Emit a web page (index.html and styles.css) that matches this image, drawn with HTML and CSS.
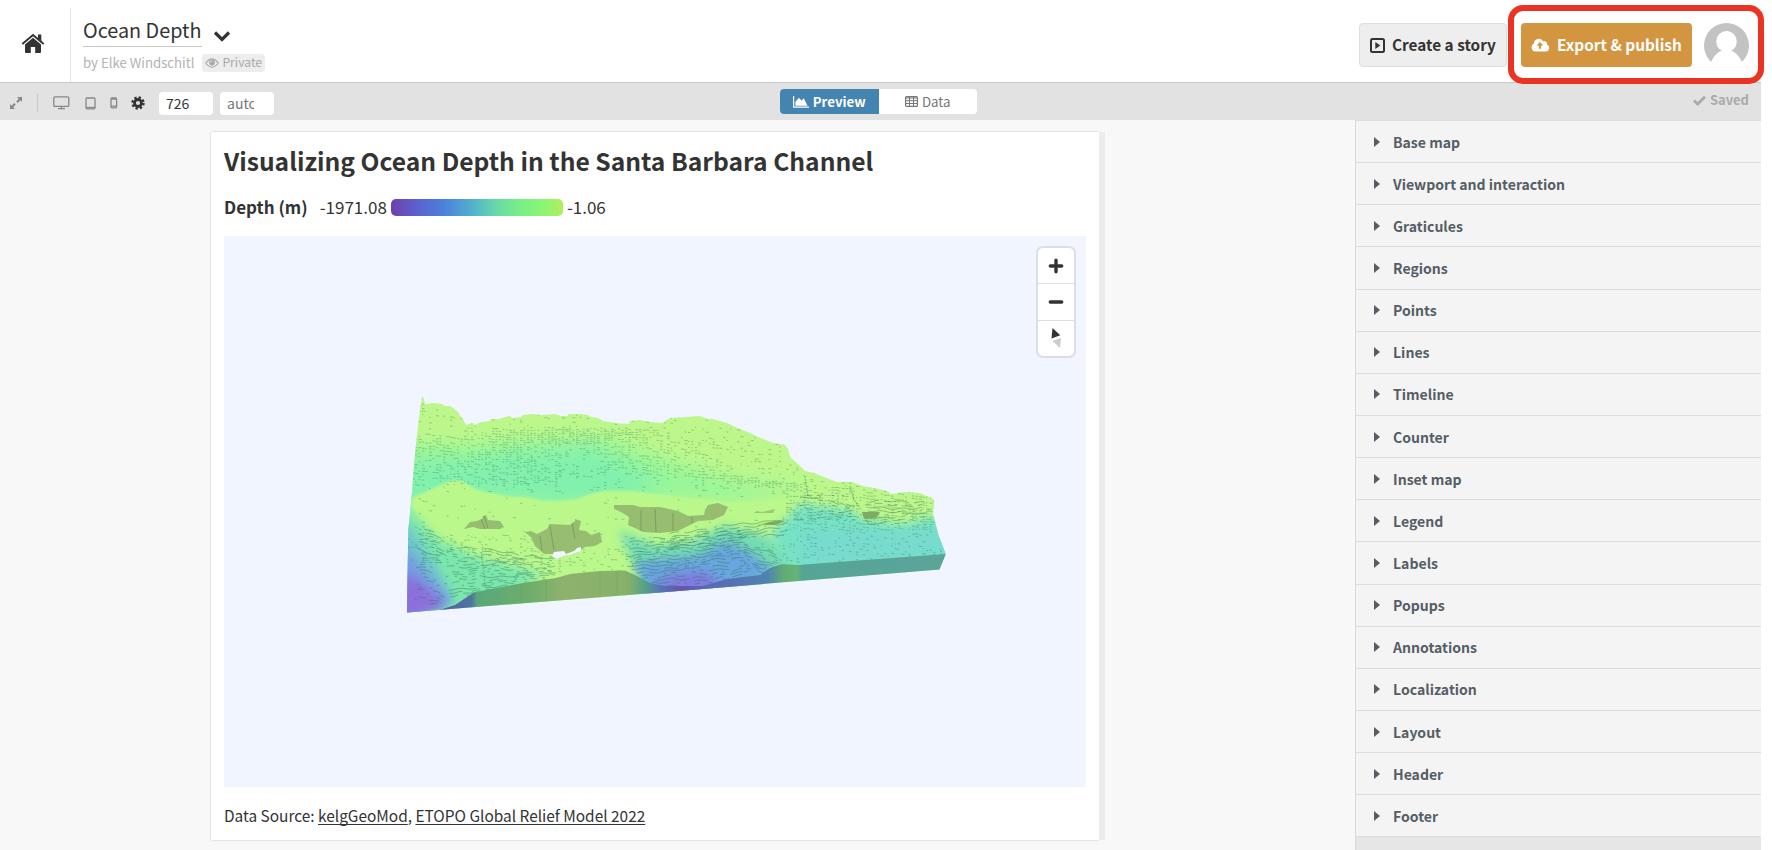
FILE: index.html
```html
<!DOCTYPE html>
<html lang="en">
<head>
<meta charset="utf-8">
<title>Ocean Depth</title>
<link rel="stylesheet" href="styles.css">
</head>
<body>
<div class="app">
  <header class="header">
    <div class="home"><svg width="24" height="21" viewBox="0 0 24 21"><path d="M12 4.8 4 11.4V19q0 1 1 1h4.8v-6h4.400v6H19q1 0 1-1v-7.600z"/><path d="M1.300 10.900 12 2l10.700 8.900" fill="none" stroke="#333" stroke-width="1.900"/><path d="M17 1.500h3.300v7L17 5.500z"/></svg></div>
    <div class="doc">
      <div class="doc-row"><span class="doc-name">Ocean Depth</span><svg class="chev" width="18" height="13" viewBox="0 0 18 13"><path d="M2 2.500 9 9.500 16 2.500" fill="none" stroke="#333" stroke-width="3.200"/></svg></div>
      <div class="by-row"><span class="by">by Elke Windschitl</span><span class="badge"><svg width="14" height="10" viewBox="0 0 14 10"><path d="M.7 5Q7-3.200 13.300 5 7 13.200.7 5z" fill="none" stroke="#aaa" stroke-width="1.200"/><circle cx="7" cy="4.500" r="2.900" fill="#aaa"/><path d="M5.500 4.300Q5.600 3 7 2.900" fill="none" stroke="#eee" stroke-width=".8"/></svg><span>Private</span></span></div>
    </div>
    <div class="actions">
      <button class="btn story"><svg width="15" height="15" viewBox="0 0 15 15"><rect x="1" y="1" width="13" height="13" rx="1.500" fill="none" stroke="#333" stroke-width="2"/><path d="M5.300 4v7l5-3.500z" fill="#333"/></svg><span>Create a story</span></button>
      <button class="btn export"><svg width="19" height="14" viewBox="0 0 19 14"><path d="M4.500 13.500A4.200 4.200 0 0 1 2.800 5.600 5 5 0 0 1 12 3.200a3 3 0 0 1 4 3.400 3.600 3.600 0 0 1-1 6.900z" fill="#fff"/><path d="M8.900 4 5.500 7.500h2.300v3.300h2.300V7.500h2.300z" fill="#d39540"/></svg><span>Export &amp; publish</span></button>
      <svg class="avatar" width="45" height="45" viewBox="0 0 45 45"><defs><clipPath id="av"><path d="M0 0h45v39H0z"/></clipPath></defs><g clip-path="url(#av)"><circle cx="22.500" cy="22.500" r="22.500" fill="#c3c3c3"/><ellipse cx="22.500" cy="18.500" rx="10.300" ry="10.500" fill="#fff"/><path d="M18 25v2.500Q11 30 6.500 40v5h32v-5Q34 30 27 27.500V25z" fill="#fff"/></g></svg>
      <div class="highlight"></div>
    </div>
  </header>
  <div class="toolbar">
    <div class="tools">
      <svg class="t-expand" width="14" height="14" viewBox="0 0 14 14" fill="#888"><path d="M8 1h5v5l-1.700-1.700-2.600 2.600-1.500-1.500 2.600-2.700zM6 13H1V8l1.700 1.700 2.600-2.600 1.500 1.500-2.600 2.700z"/></svg>
      <i class="rule"></i>
      <svg class="t-mon" width="17" height="14" viewBox="0 0 17 14" fill="none" stroke="#888" stroke-width="1.300"><rect x=".8" y=".8" width="15" height="9.600" rx="1"/><path d="M8.500 10v2.500M5 12.700h7"/></svg>
      <svg class="t-tab" width="11" height="13" viewBox="0 0 11 13" fill="none" stroke="#888" stroke-width="1.300"><rect x="1" y="1" width="9" height="10.800" rx="1"/><path d="M1 10.500h9"/></svg>
      <svg class="t-ph" width="8" height="12" viewBox="0 0 8 12" fill="none" stroke="#888" stroke-width="1.300"><rect x="1" y="1" width="5.600" height="9.800" rx="1"/><path d="M1 9.200h6M1 2h6"/></svg>
      <svg class="t-gear" width="14" height="14" viewBox="0 0 14 14" fill="none" stroke="#333"><circle cx="7" cy="7" r="3.500" stroke-width="2.800"/><circle cx="7" cy="7" r="5.600" stroke-width="2.200" stroke-dasharray="2.300 2.098"/></svg>
      <div class="num">726</div><div class="num auto"><span>auto</span></div>
    </div>
    <div class="tabs">
      <div class="tab on"><svg width="16" height="12" viewBox="0 0 16 12"><path d="M.6 0v11.200H16" fill="none" stroke="#fff" stroke-width="1.200"/><path d="M2.300 9.700V6l3.500-4.200 2.700 2.700 2.300-2.200 3.700 7.400z" fill="#fff"/></svg><span>Preview</span></div>
      <div class="tab"><svg width="13" height="11" viewBox="0 0 13 11" fill="none" stroke="#777"><rect x=".6" y=".6" width="11.800" height="9.800" rx="1" stroke-width="1.200"/><path d="M1 2h11M1 4.700h11M1 7.500h11M4.500 1v9.500M8.500 1v9.500"/></svg><span>Data</span></div>
    </div>
    <div class="saved"><svg width="13" height="11" viewBox="0 0 13 11"><path d="M1 5.500 4.700 9 12 1.700" fill="none" stroke="#aaa" stroke-width="2.800"/></svg><span>Saved</span></div>
  </div>
  <div class="main">
    <div class="stage">
      <div class="card">
        <h1 class="title">Visualizing Ocean Depth in the Santa Barbara Channel</h1>
        <div class="legend"><b>Depth (m)</b><span class="lo">-1971.08</span><i class="ramp"></i><span>-1.06</span></div>
        <div class="map">
          <svg class="terrain" width="862" height="551" viewBox="224 236 862 551">
            <defs>
              <clipPath id="land"><path d="M422 396L424 399 425 404 434 403 442 404 445 406 450 406 453 408 458 412 460 416 463 419 466 425 472 423 475 425 481 422 490 421 491 419 499 419 505 417 510 416 512 418 521 417 523 415 533 414 541 415 555 414 560 416 567 416 569 414 580 414 588 415 591 417 598 418 603 421 610 422 620 423.500 629 424 630 421 640 420 650 422 663 423 667 420 670 418 685 417 700 416 708 419 713 419 727 423 735 427 750 433 758 437 773 443 785 445 788 449 790 457 797 463 805 471 814 473 824 477 837 482 852 482 863 486 874 488 887 491 892 494 905 492 920 493 926 496 932 498 934 500 934 506 933 513 938 534 945.700 554 939.500 569.500 660 592.500 407 612.500 408.300 530 411.700 496Q414 465 416 445L418.300 423z"/></clipPath>
              <linearGradient id="wall" gradientUnits="userSpaceOnUse" x1="407" x2="945" y1="0" y2="0"><stop offset="0" stop-color="#5b489f"/><stop offset=".12" stop-color="#4d74a4"/><stop offset=".13" stop-color="#58a77a"/><stop offset=".23" stop-color="#6fae6c"/><stop offset=".29" stop-color="#8db26d"/><stop offset=".41" stop-color="#87b26b"/><stop offset=".44" stop-color="#56a383"/><stop offset=".47" stop-color="#5577b6"/><stop offset=".51" stop-color="#6655ac"/><stop offset=".56" stop-color="#5a68b5"/><stop offset=".67" stop-color="#4f82b0"/><stop offset=".7" stop-color="#62ab76"/><stop offset=".725" stop-color="#64b477"/><stop offset=".735" stop-color="#55a596"/><stop offset="1" stop-color="#5ca49a"/></linearGradient>
              <filter id="b5" x="-30%" y="-50%" width="160%" height="200%"><feGaussianBlur stdDeviation="5"/></filter>
              <filter id="b9" x="-30%" y="-50%" width="160%" height="200%"><feGaussianBlur stdDeviation="9"/></filter>
              <filter id="b2" x="-30%" y="-50%" width="160%" height="200%"><feGaussianBlur stdDeviation="1.200"/></filter>
            </defs>
            <g clip-path="url(#land)">
              <path d="M400 390h560v230H400z" fill="#bdf78b"/>
              <path d="M400 444 470 447 530 441 600 438 655 456 730 480 810 490 740 500 670 500 550 502 470 500 400 498z" fill="#98f69a" filter="url(#b9)"/>
              <path d="M400 460 450 460 530 452 590 448 640 470 660 490 580 506 480 498 400 520z" fill="#82f1ad" filter="url(#b9)"/>
              <path d="M412 498 418 495 436 487 450 481 456 480 466 483 475 489 490 493 507 496 530 498 542 501 560 501 577 499 590 494 605 491 630 491 680 497 730 503 780 500 800 496 780 525 690 540 640 545 625 580 540 578 470 560 440 545 425 525 411 506z" fill="#bbf88b" filter="url(#b2)"/>
              <path d="M400 510 418 518 440 540 475 556 520 568 545 574 500 600 400 620z" fill="#7be7ac" filter="url(#b5)"/>
              <path d="M400 515 412 530 430 555 445 580 455 605 400 622z" fill="#6fc5cf" filter="url(#b5)"/>
              <path d="M400 545 412 555 428 575 452 600 400 622z" fill="#779be0" filter="url(#b5)"/>
              <path d="M400 572 418 580 446 605 400 622z" fill="#8b70dc" filter="url(#b5)"/>
              <path d="M618 530 655 545 690 542 725 525 765 535 800 560 770 580 650 600z" fill="#75dcb2" filter="url(#b5)"/>
              <path d="M634 562 700 555 725 540 750 552 774 570 725 600 650 598z" fill="#69a6df" filter="url(#b5)"/>
              <path d="M648 586 675 574 705 572 722 583 695 592z" fill="#8278e0" filter="url(#b5)"/>
              <path d="M770 535 800 504 850 510 865 520 900 525 940 515 960 565 790 572z" fill="#78e2c4" filter="url(#b5)"/>
              <path d="M800 530 850 528 900 530 950 528 950 560 800 565z" fill="#77dcce" filter="url(#b5)"/>
              <path id="grain" fill="none" stroke="#2d7752" stroke-opacity=".38" stroke-width=".9"/>
              <path id="waves" fill="none" stroke="#2f6f5b" stroke-opacity=".42" stroke-width="1"/>
              <path d="M850 486 854 500 860 508M805 476 808 497M481 552 484 572 485 586M838 495v10M820 496v10" fill="none" stroke="#5c965f" stroke-opacity=".55" stroke-width="1.300" stroke-dasharray="2 1"/>
              <path d="M862 512 880 512 876 518 864 519z M762 524 779 520 785 521 776 525 767 525z" fill="#7eaa62"/>
              <g fill="#97bd70">
                <path d="M464 529 470 522 477 521 482 519 483 516 486 515 488 520 500 521 504 527 500 529 480 529 473 527z"/>
                <path d="M522 530 526 532 531 531 537 534 545 530 548 528 549 524 570 525 575 521 575 519 581 521 579 530 586 531 591 535 600 532 602 542 595 546 585 547 578 552 573 554 552 554 544 554 535 546 531 537z"/>
                <path d="M614 505 622 505 633 505 640 507 660 507 678 511 688 516 704 515 705 510 708 505 718 503 728 507 724 515 713 520 698 521 688 526 678 531 660 533 643 532 637 529 628 525 629 517 621 512 614 509z"/>
                <path d="M756 511 762 512 775 509 773 513 756 513z" opacity=".8"/>
              </g>
              <path d="M481 519l4 10M484 516l4 12M540 536l2 15M550 526l4 24M572 523l3 16M641 510v21M655 509l1 23M673 513v18M692 517v6" stroke="#5d7f48" stroke-opacity=".5" fill="none"/>
              <path d="M552 556 554 552 564 551 566 554 574 551 577 548 581 547 581 551 570 555 563 556 557 559z" fill="#f0f5ff"/>
              <path d="M430 613 455 605 473 593 486 590 523 583 556 578 570 574 600 571 625 570.500 635 575 650 583 665 586 703 586 727 579 760 575 770 568 782 564 797 565 946 554 940 575 661 598 407 618z" fill="url(#wall)"/>
              <path d="M521 584v24M546 581v24M600 572v28M617 571v27M627 572v25" stroke="#4a6a44" stroke-opacity=".12" fill="none"/>
            </g>
          </svg>
          <div class="controls">
            <div class="ctl"><svg width="16" height="16" viewBox="0 0 16 16"><path d="M8 2.300v11.400M2.300 8h11.400" stroke="#333" stroke-width="3.400" stroke-linecap="round"/></svg></div>
            <div class="ctl"><svg width="16" height="16" viewBox="0 0 16 16"><path d="M2.300 8h11.400" stroke="#333" stroke-width="3.400" stroke-linecap="round"/></svg></div>
            <div class="ctl"><svg width="16" height="22" viewBox="0 0 16 22"><path d="M4.500 1 12.300 8.300 3.500 11.500z" fill="#333"/><path d="M4.500 14 13 11 12 21z" fill="#ccc"/></svg></div>
          </div>
        </div>
        <div class="source">Data Source: <u>kelgGeoMod</u>, <u>ETOPO Global Relief Model 2022</u></div>
      </div>
      <div class="handle"></div>
    </div>
    <aside class="side">
      <div class="row">Base map</div><div class="row">Viewport and interaction</div><div class="row">Graticules</div><div class="row">Regions</div><div class="row">Points</div><div class="row">Lines</div><div class="row">Timeline</div><div class="row">Counter</div><div class="row">Inset map</div><div class="row">Legend</div><div class="row">Labels</div><div class="row">Popups</div><div class="row">Annotations</div><div class="row">Localization</div><div class="row">Layout</div><div class="row">Header</div><div class="row">Footer</div>
    </aside>
  </div>
</div>
<script src="terrain.js"></script>
</body>
</html>
```

FILE: styles.css
```css
* { box-sizing: border-box; }
body { margin: 0; width: 1772px; height: 850px; overflow: hidden; background: #fff; color: #333; font-family: "Noto Sans CJK SC", "Noto Sans", sans-serif; }
svg { display: block; flex: none; }
.app { width: 1761px; height: 850px; display: flex; flex-direction: column; }
.header { height: 83px; flex: none; display: flex; border-bottom: 1px solid #c9c9c9; }
.home { width: 71px; margin-top: 8px; padding: 25px 0 0 21px; border-right: 1px solid #e6e6e6; fill: #333; }
.doc { padding: 17px 0 0 12px; }
.doc-row { display: flex; }
.doc-name { font-size: 19.8px; line-height: 26px; height: 30px; border-bottom: 1px solid #c8c8c8; white-space: nowrap; }
.chev { margin: 13px 0 0 11px; }
.by-row { display: flex; align-items: center; margin-top: 6px; height: 19px; }
.by { font-size: 13.2px; line-height: 19px; color: #b3b3b3; white-space: nowrap; }
.badge { display: flex; align-items: center; gap: 3px; height: 18px; margin-left: 8px; padding: 0 3px; border-radius: 4px; background: #ededed; color: #aaa; font-size: 12.2px; line-height: 17px; }
.badge span { padding-bottom: 1px; }
.actions { margin-left: auto; display: flex; position: relative; padding: 23px 12px 0 0; }
.btn { display: flex; align-items: center; height: 44px; border-radius: 4px; font-family: inherit; font-weight: 700; font-size: 15.35px; line-height: 20px; padding: 0; white-space: nowrap; }
.btn span { padding-bottom: 2px; }
.story { width: 148px; padding-left: 10px; gap: 7px; background: #eee; border: 1px solid #ddd; color: #333; }
.export { width: 171px; margin-left: 14px; padding-left: 10px; gap: 7px; background: #d39540; color: #fff; border: 0; }
.avatar { margin-left: 12px; }
.highlight { position: absolute; left: 149px; top: 5px; width: 256px; height: 79px; border: 6px solid #ea3323; border-radius: 15px; z-index: 2; }
.toolbar { height: 37px; flex: none; background: #e2e2e2; display: flex; align-items: flex-start; }
.tools { width: 780px; height: 37px; display: flex; align-items: center; padding: 3px 0 0 9px; }
.rule { width: 1px; height: 18px; margin-left: 14px; background: #c6c6c6; }
.t-mon { margin-left: 15px; }
.t-tab { margin-left: 15px; }
.t-ph { margin-left: 14px; }
.t-gear { margin-left: 13px; }
.num { width: 54px; height: 23px; margin-left: 14px; padding-left: 7px; background: #fff; border-radius: 4px; font-size: 14px; line-height: 22px; }
.auto { margin-left: 7px; color: #777; }
.auto span { display: block; width: 27px; overflow: hidden; }
.tabs { display: flex; width: 197px; height: 25px; margin-top: 6px; border-radius: 4px; overflow: hidden; background: #fff; font-size: 13.3px; line-height: 24px; color: #777; }
.tab { flex: 1; display: flex; align-items: center; justify-content: center; gap: 4px; }
.on { background: #4384b0; color: #fff; font-weight: 700; }
.saved { margin-left: auto; padding: 8px 12px 0 0; display: flex; align-items: center; gap: 4px; color: #aaa; font-size: 13px; line-height: 18px; font-weight: 700; }
.main { flex: 1; display: flex; min-height: 0; }
.stage { width: 1355px; background: #f8f8f8; padding: 12px 0 0 211px; display: flex; }
.card { width: 888px; height: 708px; padding: 0 13px; background: #fff; box-shadow: 0 0 2px rgba(0,0,0,.22); }
.title { margin: 0; padding-top: 10px; font-size: 24.64px; line-height: 36px; height: 48px; white-space: nowrap; }
.legend { display: flex; align-items: center; height: 24px; margin-top: 15px; font-size: 17px; line-height: 24px; }
.legend .lo { margin-left: 12px; }
.ramp { width: 172px; height: 17px; margin: 0 4px; border-radius: 5px; background: linear-gradient(90deg, #6e40aa, #5b61cf 15%, #4b7fdb 30%, #53b3cb 48%, #69dca5 62%, #7aef84 76%, #87f577 87%, #aff05b); }
.map { position: relative; height: 551px; margin-top: 17px; background: #f0f5ff; }
.controls { position: absolute; left: 812px; top: 10px; width: 40px; height: 112px; border: 2px solid #dadee6; border-radius: 7px; background: #fff; display: flex; flex-direction: column; overflow: hidden; }
.ctl { flex: 1; display: flex; align-items: center; justify-content: center; }
.ctl + .ctl { border-top: 1px solid #ddd; }
.source { margin-top: 16px; font-size: 15.42px; line-height: 24px; white-space: nowrap; }
.source u { text-underline-offset: 2px; text-decoration-thickness: 1px; text-decoration-skip-ink: none; }
.handle { width: 6px; height: 708px; background: #ececec; }
.side { width: 406px; border-left: 1px solid #d8d8d8; background: #e6e6e6; }
.row { height: 42.150px; display: flex; align-items: center; gap: 13px; padding-left: 18px; background: #f4f4f4; border-top: 1px solid #ddd; color: #545e66; font-size: 14.05px; line-height: 20px; font-weight: 700; }
.row:last-child { border-bottom: 1px solid #ddd; height: 43px; }
.row::before { content: ""; border-left: 6px solid #545e66; border-top: 5px solid transparent; border-bottom: 5px solid transparent; }
```

FILE: terrain.js
```js
// Relief texture: short dashes on the slopes and wavy ledges on the steep parts.
let seed = 7;
const rnd = () => (seed = (seed * 16807) % 2147483647) / 2147483647;
const inside = (x, y, x0, x1, y0, y1) => x > x0 && x < x1 && y > y0 && y < y1;
let grain = "";
for (let r = 400; r < 570; r += 2.5) {
  for (let x = 408; x < 944; x += 3.5) {
    const y = r + 5 * Math.sin(x / 42 + r / 30) + x / 60 - 9 + rnd();
    let p = 0.15;
    if (inside(x, y, 410, 560, 432, 485)) p = 0.5;
    if (inside(x, y, 560, 610, 445, 490)) p = 0.2;
    if (inside(x, y, 490, 660, 428, 445)) p = 0.8;
    if (inside(x, y, 600, 720, 440, 475)) p = 0.45;
    if (Math.abs(y - 468 - (x - 650) * 0.13) < 4 && x > 640 && x < 810) p = 0.75;
    if (inside(x, y, 430, 790, 492, 535)) p = 0.025;
    if (inside(x, y, 410, 560, 535, 610)) p = 0.3;
    if (inside(x, y, 780, 930, 486, 530)) p = 0.6;
    if (inside(x, y, 780, 935, 530, 558)) p = 0.25;
    if (rnd() < p) grain += `M${x.toFixed(1)} ${y.toFixed(1)}l${(1.2 + rnd() * 2.2).toFixed(1)} .3`;
  }
}
document.getElementById("grain").setAttribute("d", grain);
let waves = "";
// Ledges fill a sheared band: slopeTop and slopeBottom tilt its two edges.
const ledges = (x0, x1, y0, y1, slopeTop, slopeBottom, keep, step) => {
  for (let r = y0; r < y1; r += step) {
    const k = (r - y0) / (y1 - y0);
    const slope = slopeTop + (slopeBottom - slopeTop) * k;
    let pen = false;
    for (let x = x0 + rnd() * 8; x < x1 - rnd() * 10; x += 2.5) {
      const y = r + slope * (x - x0) + 0.8 * Math.sin(x / 3.5 + r * 2) + 0.9 * Math.sin(x / 11 + r / 4);
      if (rnd() < keep) { waves += `${pen ? "L" : "M"}${x.toFixed(1)} ${y.toFixed(1)}`; pen = true; } else pen = false;
    }
  }
};
ledges(414, 450, 525, 606, 0.35, 0, 0.62, 3);
ledges(444, 560, 545, 600, 0.12, -0.14, 0.7, 3);
ledges(624, 700, 540, 590, -0.05, -0.05, 0.8, 3);
ledges(690, 752, 536, 586, -0.12, -0.1, 0.78, 3);
ledges(738, 784, 540, 572, 0.35, 0.1, 0.7, 3);
ledges(665, 790, 534, 550, -0.13, -0.13, 0.82, 3);
ledges(862, 934, 502, 526, -0.01, 0.02, 0.82, 3);
ledges(794, 862, 494, 520, 0.05, 0.05, 0.6, 3);
document.getElementById("waves").setAttribute("d", waves);
```
